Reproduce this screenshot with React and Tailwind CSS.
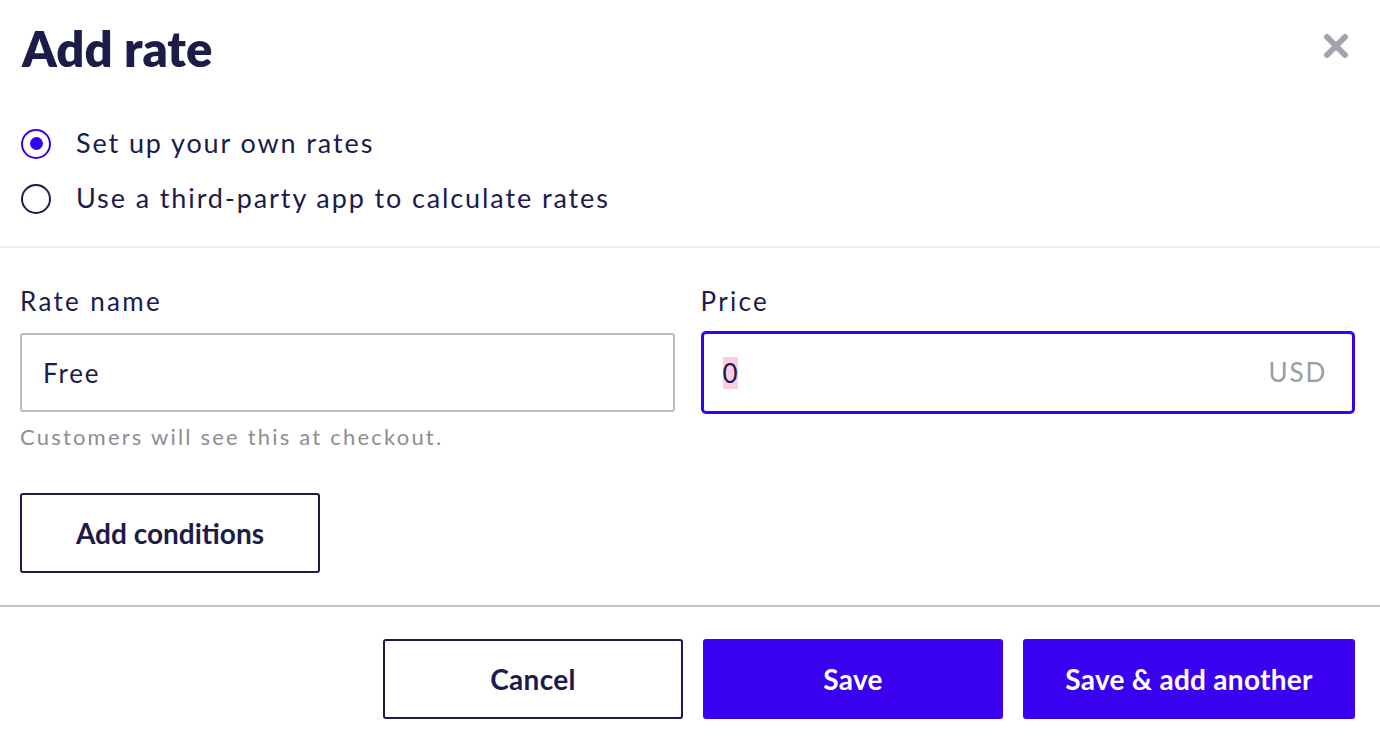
import { useState } from "react";

const navy = "text-[#1c1b4a]";

const Radio = ({ checked, label, onClick }) => (
  <label
    onClick={onClick}
    className="flex items-center h-[55px] cursor-pointer"
  >
    <span
      className={`flex items-center justify-center w-[30px] h-[30px] rounded-full border-2 ${
        checked ? "border-[#3a00f0]" : "border-[#1c1b4a]"
      }`}
    >
      {checked && <span className="w-[13px] h-[13px] rounded-full bg-[#3a00f0]"></span>}
    </span>
    <span className={`ml-[25px] text-[27px] tracking-[0.07em] ${navy}`}>{label}</span>
  </label>
);

const App = () => {
  const [mode, setMode] = useState("own");
  const [name, setName] = useState("Free");
  const [price] = useState("0");

  return (
    <div className="w-[1380px] h-[738px] bg-white font-['Lato',sans-serif] overflow-hidden">
      {/* header */}
      <div className="flex items-start justify-between pl-[22px] pr-[30px] pt-[22px]">
        <h1 className={`text-[49px] leading-[52px] font-extrabold ${navy}`}>Add rate</h1>
        <button className="mt-[10px] text-[#a3a3ab]">
          <svg width="28" height="28" viewBox="0 0 28 28">
            <path
              d="M5 5 L23 23 M23 5 L5 23"
              stroke="currentColor"
              strokeWidth="6"
              strokeLinecap="round"
            />
          </svg>
        </button>
      </div>

      {/* rate type */}
      <div className="pl-[21px] pt-[42px] pb-[20px]">
        <Radio checked={mode === "own"} label="Set up your own rates" onClick={() => setMode("own")} />
        <Radio
          checked={mode === "app"}
          label="Use a third-party app to calculate rates"
          onClick={() => setMode("app")}
        />
      </div>
      <hr className="border-0 h-[2px] bg-[#efefef]" />

      {/* form */}
      <div className="px-[20px] pr-[25px] pt-[38px]">
        <div className="grid grid-cols-2 gap-[26px]">
          <div>
            <p className={`text-[26px] tracking-[0.09em] leading-[30px] ${navy}`}>Rate name</p>
            <input
              value={name}
              onChange={(e) => setName(e.target.value)}
              className={`mt-[17px] w-full h-[79px] px-[21px] border-2 border-[#bcbcc0] rounded-[3px] text-[26px] tracking-[0.07em] outline-none ${navy}`}
            />
            <p className="mt-[8px] text-[22px] tracking-[0.1em] text-[#8d8d93]">
              Customers will see this at checkout.
            </p>
          </div>
          <div>
            <p className={`text-[26px] tracking-[0.09em] leading-[30px] ${navy}`}>Price</p>
            <div className="mt-[15px] h-[83px] flex items-center pl-[19px] pr-[25px] border-[3px] border-[#3a00f0] rounded-[5px]">
              <span className={`bg-[#fccde5] text-[26px] leading-[32px] ${navy}`}>{price}</span>
              <span className="flex-1"></span>
              <span className="text-[26px] tracking-[0.07em] text-[#9c9ca3]">USD</span>
            </div>
          </div>
        </div>
        <button
          className={`mt-[40px] w-[300px] h-[80px] border-2 border-[#1c1b4a] rounded-[3px] text-[28px] font-bold ${navy}`}
        >
          Add conditions
        </button>
      </div>

      <hr className="mt-[32px] border-0 h-[2px] bg-[#c4c4c8]" />

      {/* footer */}
      <div className="flex justify-end gap-[20px] pr-[25px] pt-[32px]">
        <button
          className={`w-[300px] h-[80px] border-2 border-[#1c1b4a] rounded-[3px] text-[28px] font-bold tracking-[0.01em] ${navy}`}
        >
          Cancel
        </button>
        <button className="w-[300px] h-[80px] bg-[#3a00f0] rounded-[3px] text-[28px] font-bold tracking-[0.01em] text-white">
          Save
        </button>
        <button className="w-[332px] h-[80px] bg-[#3a00f0] rounded-[3px] text-[28px] font-bold tracking-[0.01em] text-white">
          Save &amp; add another
        </button>
      </div>
    </div>
  );
};

export default App;
